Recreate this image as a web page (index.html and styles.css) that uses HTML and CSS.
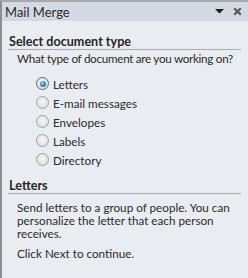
FILE: index.html
```html
<!DOCTYPE html>
<html>
<head>
<meta charset="utf-8">
<link rel="stylesheet" href="styles.css">
</head>
<body>
<div class="pane">
  <div class="titlebar">
    <span class="title">Mail Merge</span>
    <div class="tools">
      <svg class="drop" width="9" height="5" viewBox="0 0 9 5"><path d="M0 0H9L4.5 4.5Z" fill="#1e1e1e"/></svg>
      <svg class="close" width="9" height="9" viewBox="0 0 9 9"><path d="M1.2 1.2L7.8 7.8M7.8 1.2L1.2 7.8" stroke="#5a5a5a" stroke-width="2.2"/></svg>
    </div>
  </div>
  <div class="content">
    <div class="section-head">Select document type</div>
    <div class="question">What type of document are you working on?</div>
    <ul class="options">
      <li class="option"><span class="radio checked"></span>Letters</li>
      <li class="option"><span class="radio"></span>E-mail messages</li>
      <li class="option"><span class="radio"></span>Envelopes</li>
      <li class="option"><span class="radio"></span>Labels</li>
      <li class="option"><span class="radio"></span>Directory</li>
    </ul>
    <div class="section-head second">Letters</div>
    <p class="desc">Send letters to a group of people. You can personalize the letter that each person receives.</p>
    <p class="desc next">Click Next to continue.</p>
  </div>
</div>
</body>
</html>
```
FILE: styles.css
```css
html, body {
  margin: 0;
  padding: 0;
}
body {
  width: 248px;
  height: 278px;
  overflow: hidden;
  font-family: Lato, "Open Sans", sans-serif;
  font-size: 11.7px;
  color: #2b2b2b;
  background: #e9ecf1;
}
.pane {
  height: 276px;
  border-top: 2px solid #a7a9ac;
  border-left: 2px solid #8c8e91;
  background: #e9ecf1;
}
.titlebar {
  height: 19px;
  background: #d5dae2;
  display: flex;
  align-items: center;
  justify-content: space-between;
  padding: 0 6px 0 3px;
}
.title {
  font-size: 13px;
  color: #2a2a2a;
}
.tools {
  display: flex;
  align-items: center;
  gap: 9px;
}
.content {
  padding: 14px 7px 0 6px;
}
.section-head {
  font-weight: bold;
  font-size: 12.6px;
  color: #262626;
  border-bottom: 1px solid #a9acb0;
  line-height: 14px;
  padding-left: 1px;
}
.section-head.second {
  margin-top: 10px;
}
.question {
  margin: 2px 0 0 9px;
  line-height: 13px;
  white-space: nowrap;
  letter-spacing: -0.3px;
}
.options {
  list-style: none;
  margin: 9px 0 0 0;
  padding: 0 0 0 28px;
}
.option {
  display: flex;
  align-items: center;
  height: 19px;
}
.radio {
  width: 11px;
  height: 11px;
  border-radius: 50%;
  border: 1px solid #a0a0a0;
  background: radial-gradient(circle at 50% 40%, #f8f8f8, #d6d6d6);
  margin-right: 4px;
  box-sizing: content-box;
  position: relative;
}
.radio.checked {
  border-color: #5b6875;
}
.radio.checked::after {
  content: "";
  position: absolute;
  left: 2.5px;
  top: 2.5px;
  width: 6px;
  height: 6px;
  border-radius: 50%;
  background: radial-gradient(circle at 40% 35%, #8fd8ff, #1a72b8 65%, #0b4e8a);
}
.desc {
  margin: 7px 0 0 9px;
  line-height: 13px;
}
.desc.next {
  margin-top: 7px;
}
```
